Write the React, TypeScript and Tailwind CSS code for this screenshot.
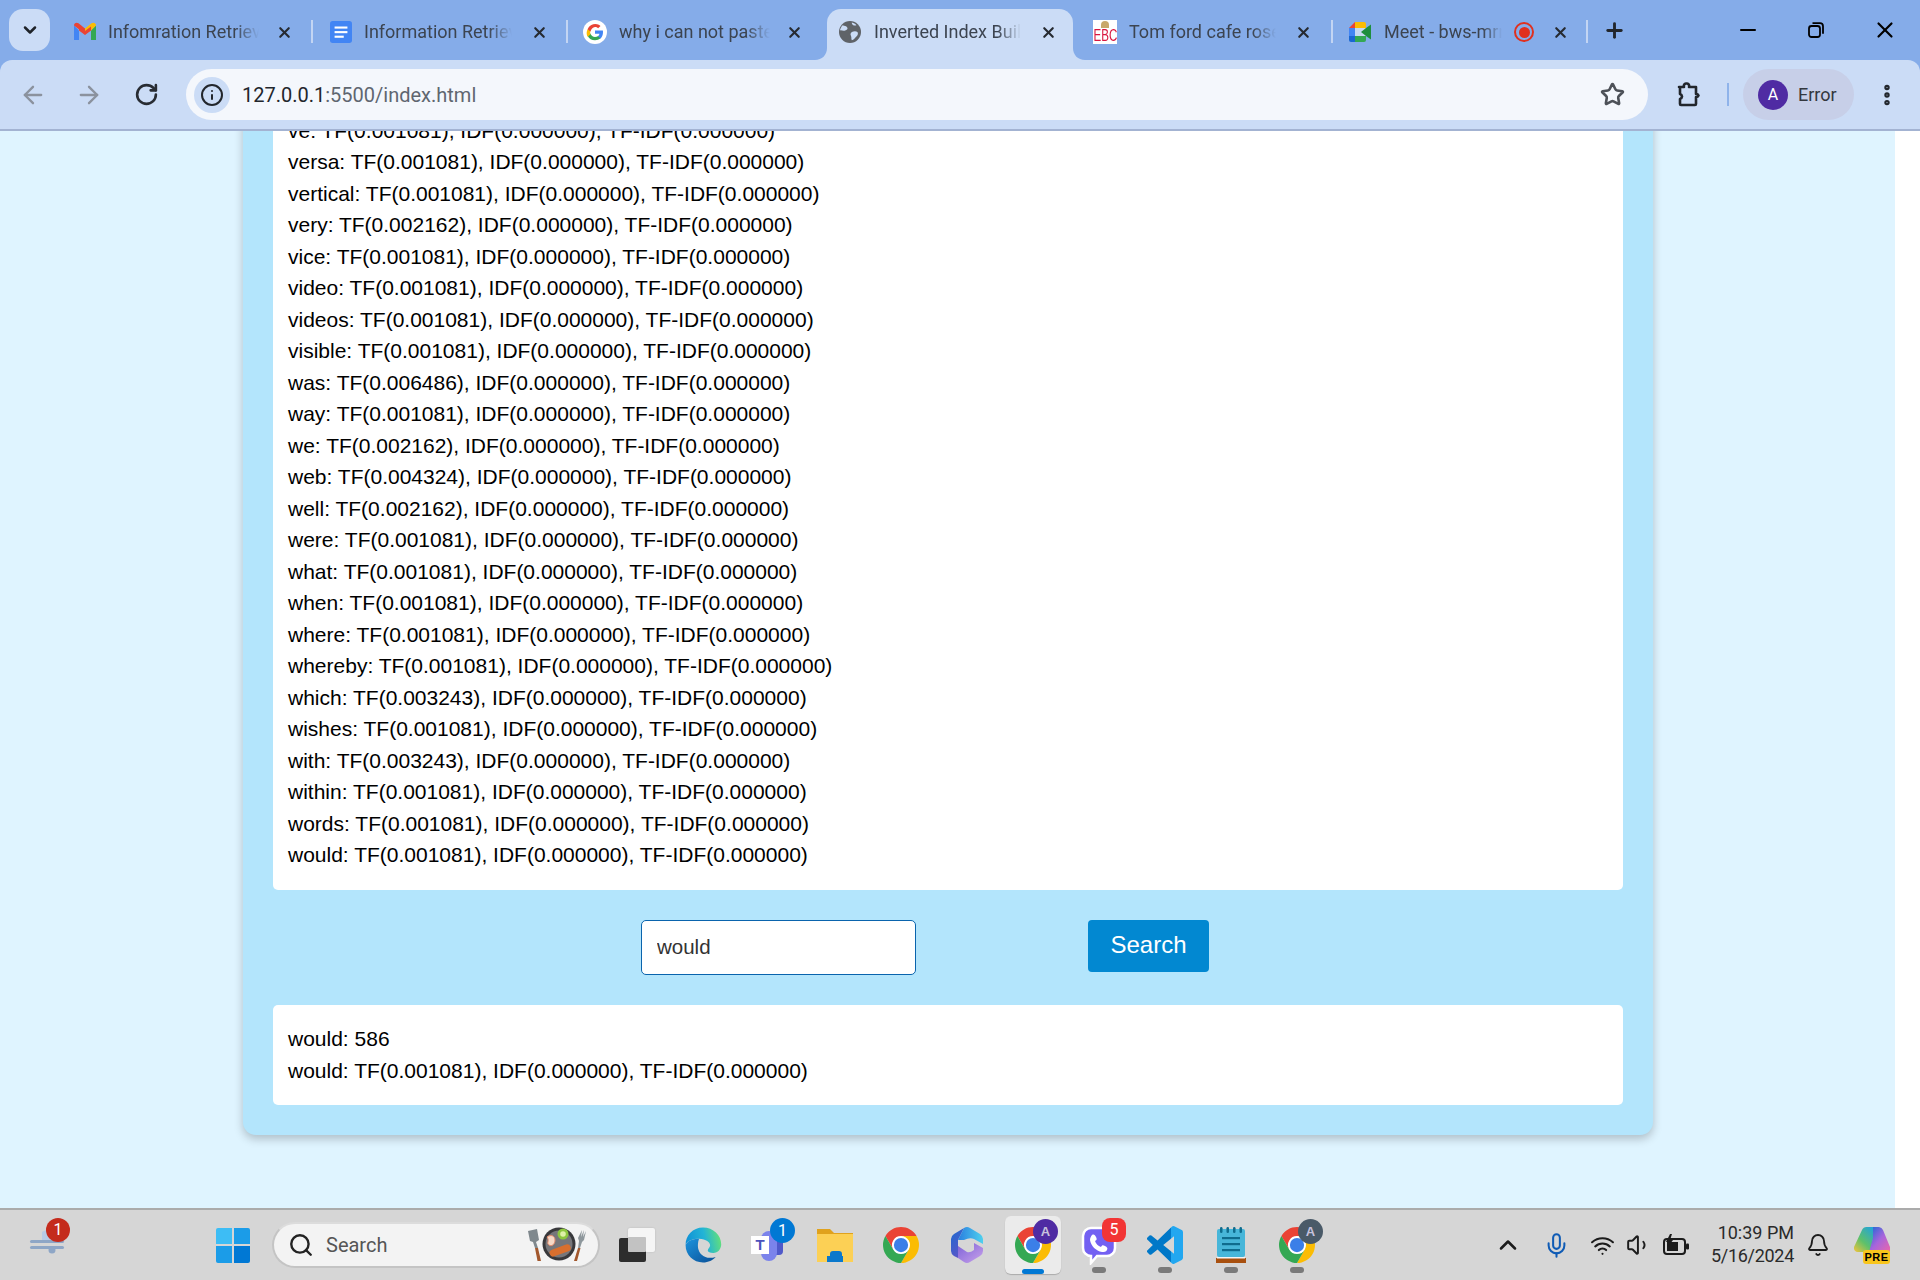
import React from "react";
import { ArrowLeft, ArrowRight, RotateCw, Info, Star, ChevronDown, ChevronUp, X, Plus, Minus, Search, Mic, Wifi, Volume1, Bell, EllipsisVertical } from "lucide-react";

const rows: [string, string][] = [
  ["ve", "0.001081"], ["versa", "0.001081"], ["vertical", "0.001081"], ["very", "0.002162"], ["vice", "0.001081"],
  ["video", "0.001081"], ["videos", "0.001081"], ["visible", "0.001081"], ["was", "0.006486"], ["way", "0.001081"],
  ["we", "0.002162"], ["web", "0.004324"], ["well", "0.002162"], ["were", "0.001081"], ["what", "0.001081"],
  ["when", "0.001081"], ["where", "0.001081"], ["whereby", "0.001081"], ["which", "0.003243"], ["wishes", "0.001081"],
  ["with", "0.003243"], ["within", "0.001081"], ["words", "0.001081"], ["would", "0.001081"],
];

const line = (w: string, tf: string) => `${w}: TF(${tf}), IDF(0.000000), TF-IDF(0.000000)`;

function Chrome({ size = 36 }: { size?: number }) {
  return (
    <svg width={size} height={size} viewBox="0 0 48 48">
      <circle cx="24" cy="24" r="13" fill="#fff" />
      <path d="M3.22 12A24 24 0 0 1 44.78 12H24A12 12 0 0 0 13.6 30Z" fill="#ea4335" />
      <path d="M44.78 12A24 24 0 0 1 24 48L34.39 30A12 12 0 0 0 24 12Z" fill="#fbbc04" />
      <path d="M24 48A24 24 0 0 1 3.22 12L13.6 30A12 12 0 0 0 34.39 30Z" fill="#34a853" />
      <circle cx="24" cy="24" r="9.5" fill="#3b7fe8" />
    </svg>
  );
}

function Gmail() {
  return (
    <svg width="24" height="24" viewBox="0 0 24 24">
      <path d="M1 5.5V20h5V10.5Z" fill="#4285f4" />
      <path d="M18 10.500V20h5V5.500Z" fill="#34a853" />
      <path d="M1 5.500C1 3 3.500 2 5.500 3.300L12 8.500 12 14 1 5.500Z" fill="#ea4335" />
      <path d="M12 8.500l6.500-5.200C20.500 2 23 3 23 5.500L18 10.500 12 14Z" fill="#fbbc04" />
      <path d="M6 10.500 12 15l6-4.500V6.500L12 11 6 6.500Z" fill="#ea4335" />
    </svg>
  );
}

function DocsIcon() {
  return (
    <svg width="24" height="24" viewBox="0 0 24 24" className="ml-[2px]">
      <rect x="0" y="0" width="24" height="24" rx="3" fill="#4285f4" />
      <rect x="5" y="6" width="14" height="2.300" fill="#fff" />
      <rect x="5" y="11" width="14" height="2.300" fill="#fff" />
      <rect x="5" y="16" width="10" height="2.300" fill="#fff" />
    </svg>
  );
}

function GoogleG() {
  return (
    <svg width="24" height="24" viewBox="0 0 24 24">
      <circle cx="12" cy="12" r="12" fill="#fff" />
      <path d="M20 12.200c0-.6-.05-1.200-.15-1.700H12v3.300h4.500a3.900 3.900 0 0 1-1.650 2.500v2.100h2.700C19.100 16.900 20 14.700 20 12.200Z" fill="#4285f4" />
      <path d="M12 20.300c2.200 0 4.100-.75 5.500-2l-2.700-2.100c-.75.5-1.700.8-2.800.8-2.150 0-4-1.450-4.650-3.400H4.600v2.150A8.300 8.300 0 0 0 12 20.300Z" fill="#34a853" />
      <path d="M7.350 14.600a5 5 0 0 1 0-3.200V9.250H4.600a8.300 8.300 0 0 0 0 7.500Z" fill="#fbbc04" />
      <path d="M12 7c1.200 0 2.300.4 3.150 1.250l2.350-2.350A8.300 8.300 0 0 0 4.600 9.250l2.750 2.150C8 9.450 9.850 7 12 7Z" fill="#ea4335" />
    </svg>
  );
}

function Globe() {
  return (
    <svg width="22" height="22" viewBox="0 0 24 24">
      <circle cx="12" cy="12" r="12" fill="#5f6368" />
      <path d="M4 4.500c2 1 4 .5 5 2.500s-1 3-3 3.500-4-1-5 0C1.500 8 2.500 6 4 4.500Z" fill="#cbdcf6" />
      <path d="M14 12c2-1 5-1 6 0s1 3-1 5-3 4-5 4c-1-2 0-3-1-5s0-3 1-4Z" fill="#cbdcf6" />
      <path d="M14 1.500c2 .5 4 1.500 5 3-1.500 1-3 .5-4-.5s-1-1.500-1-2.500Z" fill="#cbdcf6" />
    </svg>
  );
}

function EbcIcon() {
  return (
    <div className="w-6 h-6 bg-white flex flex-col items-center overflow-hidden">
      <div className="w-[8px] h-[7px] mt-[1px] rounded-t-full bg-[#c9a86a] shrink-0" />
      <span className="text-[#d9163f] text-[17px] leading-[16px] [font-family:'Liberation_Sans',sans-serif] scale-x-[0.68] whitespace-nowrap">EBC</span>
    </div>
  );
}

function MeetIcon() {
  return (
    <svg width="24" height="24" viewBox="0 0 24 24">
      <path d="M1 8 7 2v6Z" fill="#ea4335" />
      <path d="M7 2h9a2 2 0 0 1 2 2v4H7Z" fill="#fbbc04" />
      <path d="M1 8h6v8H1Z" fill="#4285f4" />
      <path d="M1 16h6v6H3a2 2 0 0 1-2-2Z" fill="#1967d2" />
      <path d="M7 16h11v4a2 2 0 0 1-2 2H7Z" fill="#34a853" />
      <path d="M7 8h11v8H7Z" fill="#c7d9f2" />
      <path d="M13 12l5-4 5-3.500v15L18 16Z" fill="#1e8e3e" />
    </svg>
  );
}

function Tab({ icon, title, sep, active, tw = 151, extra, closeClass = "ml-[16px]", textClass = "ml-[12px]" }: { icon: React.ReactNode; title: string; sep?: boolean; active?: boolean; tw?: number; extra?: React.ReactNode; closeClass?: string; textClass?: string }) {
  return (
    <div className="relative w-[255px] h-[51px] flex items-center pl-[15px] pb-[5px] shrink-0">
      {active && (
        <>
          <div className="absolute left-[4px] right-[5px] top-0 bottom-0 bg-[#cbdcf6] rounded-t-[14px]" />
          <svg className="absolute left-[-8px] bottom-0" width="12" height="12" viewBox="0 0 12 12"><path d="M12 0V12H0C7 12 12 7 12 0Z" fill="#cbdcf6" /></svg>
          <svg className="absolute right-[-7px] bottom-0" width="12" height="12" viewBox="0 0 12 12"><path d="M0 0V12H12C5 12 0 7 0 0Z" fill="#cbdcf6" /></svg>
        </>
      )}
      <div className="relative w-6 h-6 flex items-center justify-center shrink-0">{icon}</div>
      <div style={{ width: tw }} className={`relative ${textClass} text-[18px] leading-[24px] text-[#3c4450] whitespace-nowrap overflow-hidden [font-family:Roboto,sans-serif] [mask-image:linear-gradient(to_right,black_84%,transparent)]`}>{title}</div>
      {extra}
      <X className={`relative shrink-0 text-[#262a30] ${closeClass}`} size={17} strokeWidth={3} />
      {sep && <div className="absolute right-0 top-[11px] w-[2px] h-[23px] bg-[#c3d5f3]" />}
    </div>
  );
}

function EdgeIcon() {
  return (
    <svg width="38" height="38" viewBox="0 0 48 48">
      <defs>
        <linearGradient id="e1" x1="0" y1="0.600" x2="1" y2="0.450"><stop offset="0" stopColor="#0f8fd6" /><stop offset="0.550" stopColor="#23b4d6" /><stop offset="1" stopColor="#63e07a" /></linearGradient>
        <linearGradient id="e2" x1="0" y1="0" x2="1" y2="1"><stop offset="0" stopColor="#1b94de" /><stop offset="1" stopColor="#0b4f96" /></linearGradient>
      </defs>
      <path d="M24 2C11 2 2 12 2 24c2-6 10-8 17-8 9 0 14 5 14 8 0 3-3 5-3 7 0 2 3 3 7 3 6 0 10-5 10-11C47 12 37 2 24 2Z" fill="url(#e1)" />
      <path d="M2 24c0 13 10 22 22 22 7 0 12-3 16-7-6 2-13 2-18-3-4-4-6-11-3-20-9 0-15 3-17 8Z" fill="url(#e2)" />
    </svg>
  );
}

function TeamsIcon() {
  return (
    <div className="relative w-9 h-9">
      <div className="absolute left-[20px] top-[6px] w-[12px] h-[22px] rounded-[4px] bg-[#5059c9]" />
      <div className="absolute left-[10px] top-[4px] w-[16px] h-[30px] rounded-[8px] bg-[#7b83eb]" />
      <div className="absolute left-0 top-[9px] w-[18px] h-[18px] bg-white flex items-center justify-center text-[#4b53bc] text-[15px] font-bold [font-family:'Liberation_Sans',sans-serif]">T</div>
    </div>
  );
}

function FilesIcon() {
  return (
    <svg width="36" height="36" viewBox="0 0 36 36">
      <path d="M0 2h13l4 4h19v4H0Z" fill="#e0a21d" />
      <rect x="0" y="7" width="36" height="28" fill="#fcd055" />
      <path d="M13 27a3 3 0 0 1 3-3h6a3 3 0 0 1 3 3v8H13Z M10 29h16v6H10Z" fill="#0a78cc" />
    </svg>
  );
}

function M365() {
  return (
    <svg width="34" height="38" viewBox="0 0 34 38">
      <defs>
        <linearGradient id="m1" x1="0" y1="0" x2="0.500" y2="1"><stop offset="0" stopColor="#1a6bd0" /><stop offset="1" stopColor="#5a55c8" /></linearGradient>
        <linearGradient id="m2" x1="0" y1="0.500" x2="1" y2="0.500"><stop offset="0" stopColor="#2a7fe0" /><stop offset="1" stopColor="#4fd0ee" /></linearGradient>
        <linearGradient id="m3" x1="0" y1="0" x2="1" y2="1"><stop offset="0" stopColor="#7d62d8" /><stop offset="1" stopColor="#c9a2ea" /></linearGradient>
      </defs>
      <path d="M14 2 4 8Q1 10 1 13V25Q1 28 4 30L8 32V14Z" fill="url(#m1)" />
      <path d="M14 2Q17 0 20 2L30 8Q33 10 33 13V18L24 13Q20 11 14 14L8 14Z" fill="url(#m2)" />
      <path d="M8 20 17 26Q20 27 24 24V17L33 22V25Q33 28 30 30L20 36Q17 38 14 36L8 32Z" fill="url(#m3)" />
    </svg>
  );
}

function Viber() {
  return (
    <svg width="36" height="40" viewBox="0 0 36 40">
      <path d="M10 3h16a8 8 0 0 1 8 8v12a8 8 0 0 1-8 8H16l-6 7v-7a8 8 0 0 1-8-8V11a8 8 0 0 1 8-8Z" fill="#7360f2" stroke="#fff" strokeWidth="2.500" />
      <path d="M11 10c2-1 3 0 4 2s1 3-1 4c1 3 3 5 6 6 1-2 2-2 4-1s3 2 2 4-3 2-5 2c-6-1-11-6-12-12 0-2 1-4 2-5Z" fill="#fff" />
    </svg>
  );
}

function VSCode() {
  return (
    <svg width="36" height="38" viewBox="0 0 24 24" preserveAspectRatio="none">
      <defs>
        <linearGradient id="v1" x1="0" y1="0" x2="1" y2="0"><stop offset="0.680" stopColor="#0078c8" /><stop offset="0.680" stopColor="#22a7f0" /></linearGradient>
      </defs>
      <path d="M23.150 2.587L18.210.21a1.494 1.494 0 0 0-1.705.29l-9.460 8.630-4.120-3.128a.999.999 0 0 0-1.276.057L.327 7.261A1 1 0 0 0 .326 8.740L3.899 12 .326 15.260a1 1 0 0 0 .001 1.479L1.650 17.940a.999.999 0 0 0 1.276.057l4.120-3.128 9.460 8.630a1.492 1.492 0 0 0 1.704.29l4.942-2.377A1.500 1.500 0 0 0 24 20.060V3.939a1.500 1.500 0 0 0-.85-1.352zm-5.146 14.861L10.826 12l7.178-5.448v10.896z" fill="url(#v1)" />
    </svg>
  );
}

function Notepad() {
  return (
    <svg width="30" height="38" viewBox="0 0 30 38">
      <rect x="1" y="3" width="28" height="28" rx="2" fill="#47b6d9" />
      {[5, 11.500, 18, 24.500].map((x) => (
        <rect key={x} x={x - 1} y="1" width="2.500" height="6" rx="1.200" fill="#0f6c8e" />
      ))}
      {[11, 17, 23].map((y) => (
        <rect key={y} x="6" y={y} width="18" height="2.200" fill="#0f6c8e" />
      ))}
      <rect x="0" y="32" width="30" height="5" fill="#a8500f" />
      <rect x="1" y="31" width="28" height="1.500" fill="#f4f4f4" />
    </svg>
  );
}

function Food() {
  return (
    <svg width="62" height="42" viewBox="0 0 62 42">
      <path d="M2 7 11 5 13 16 10 18 12 24 9 24 7 18 4 17Z" fill="#7f888d" />
      <path d="M9 24h3l3 13h-3.500Z" fill="#a2572c" />
      <circle cx="33" cy="20" r="16.500" fill="#38383b" />
      <circle cx="33" cy="20" r="13.500" fill="#76767a" />
      <circle cx="37" cy="10" r="5.500" fill="#8dc63f" />
      <circle cx="37" cy="10" r="2.800" fill="#dff0a8" />
      <path d="M21 13c4-3 8-1 8 3s-3 7-6 5 1-4-2-8Z" fill="#f6d9c7" stroke="#e58a6a" strokeWidth="1" />
      <rect x="23" y="23" width="22" height="7" rx="3.500" transform="rotate(-20 34 26)" fill="#d96f2e" />
      <path d="M56 6l-1 7 3-7-1 7 3-6-2 9-2 2-2 6h-2l1-7-1-3Z" fill="#8e979c" />
      <path d="M52 24h2.500l-3.500 13H48Z" fill="#a2572c" />
    </svg>
  );
}

function Copilot() {
  return (
    <div className="relative w-[38px] h-[38px]">
      <svg width="36" height="30" viewBox="0 0 36 30" className="absolute top-0 left-0">
        <defs>
          <linearGradient id="c1" x1="0" y1="1" x2="0.800" y2="0"><stop offset="0" stopColor="#f5c33b" /><stop offset="0.450" stopColor="#5ec16a" /><stop offset="1" stopColor="#23a4d8" /></linearGradient>
          <linearGradient id="c2" x1="0" y1="0" x2="1" y2="1"><stop offset="0" stopColor="#1768d4" /><stop offset="0.500" stopColor="#a765dc" /><stop offset="1" stopColor="#f067a6" /></linearGradient>
        </defs>
        <path d="M8 4a5 5 0 0 1 5-3h9l-5 21a5 5 0 0 1-5 4H4a4 4 0 0 1-4-5Z" fill="url(#c1)" />
        <path d="M19 1h6a5 5 0 0 1 4 3l7 17a3 3 0 0 1-3 5H15l4-14Z" fill="url(#c2)" />
      </svg>
      <div className="absolute left-[9px] bottom-0 w-[27px] h-[14px] rounded-[3px] bg-[#f8c51c] text-black text-[11px] leading-[14px] font-bold text-center tracking-[0.5px] [font-family:'Liberation_Sans',sans-serif]">PRE</div>
    </div>
  );
}

function Slot({ children, dot }: { children: React.ReactNode; dot?: boolean }) {
  return (
    <div className="relative w-[66px] h-full flex items-center justify-center shrink-0">
      {children}
      {dot && <div className="absolute left-[26px] bottom-[7px] w-[14px] h-[6px] rounded-full bg-[#7a7a7a]" />}
    </div>
  );
}

function AvatarBadge({ color, left }: { color: string; left: string }) {
  return (
    <div style={{ backgroundColor: color }} className={`absolute ${left} top-[9px] w-[25px] h-[25px] rounded-full flex items-center justify-center text-[#c7c2dd] text-[13px] font-bold [font-family:'Liberation_Sans',sans-serif]`}>A</div>
  );
}

export default function App() {
  return (
    <div className="w-[1920px] h-[1280px] flex flex-col overflow-hidden [font-family:'Liberation_Sans',Arial,sans-serif] bg-white">
      {/* Browser chrome */}
      <header className="h-[131px] shrink-0 bg-[#85ace9] flex flex-col">
        <div className="h-[60px] flex items-end shrink-0">
          <div className="ml-[9px] mb-[9px] w-[41px] h-[42px] rounded-[14px] bg-[#cbdcf6] flex items-center justify-center shrink-0">
            <ChevronDown size={20} strokeWidth={3} className="text-[#1f2329]" />
          </div>
          <div className="ml-[8px] flex">
            <Tab icon={<Gmail />} title="Infomration Retrieval" sep textClass="ml-[11px]" closeClass="ml-[17px]" />
            <Tab icon={<DocsIcon />} title="Information Retrieval" sep tw={148} closeClass="ml-[19px]" />
            <Tab icon={<GoogleG />} title="why i can not paste text" />
            <Tab icon={<Globe />} title="Inverted Index Builder" active tw={147} closeClass="ml-[19px]" />
            <Tab icon={<EbcIcon />} title="Tom ford cafe rose perfume" sep tw={147} closeClass="ml-[19px]" />
            <Tab
              icon={<MeetIcon />}
              title="Meet - bws-mrn-xyz"
              sep
              tw={118}
              closeClass="ml-[18px]"
              extra={
                <div className="relative ml-[12px] w-[20px] h-[20px] rounded-full border-[2px] border-[#e0301e] flex items-center justify-center shrink-0">
                  <div className="w-[11px] h-[11px] rounded-full bg-[#e0301e]" />
                </div>
              }
            />
          </div>
          <div className="ml-[14px] mb-[18px] w-[24px] h-[24px] flex items-center justify-center">
            <Plus size={23} strokeWidth={3} className="text-[#22262c]" />
          </div>
          <div className="ml-auto flex items-center h-[60px]">
            <Minus size={24} strokeWidth={2} className="text-black" />
            <svg width="16" height="16" viewBox="0 0 16 16" fill="none" stroke="black" strokeWidth="1.800" className="ml-[48px]">
              <rect x="1" y="4" width="11" height="11" rx="2.500" />
              <path d="M4.500 1.200h7.500a3 3 0 0 1 3 3v7.500" />
            </svg>
            <X size={26} strokeWidth={2} className="text-black ml-[48px] mr-[22px]" />
          </div>
        </div>
        <div className="h-[71px] bg-[#cbdcf6] rounded-t-[12px] border-b-[2px] border-[#a3b3d2] flex items-center">
          <ArrowLeft size={28} strokeWidth={2} className="ml-[19px] text-[#8b929e] shrink-0" />
          <ArrowRight size={28} strokeWidth={2} className="ml-[28px] text-[#8b929e] shrink-0" />
          <RotateCw size={25} strokeWidth={2.500} className="ml-[31px] text-[#282c33] shrink-0" />
          <div className="ml-[27px] w-[1462px] h-[51px] rounded-full bg-[#f4f7fc] flex items-center pl-[8px] pr-[23px] shrink-0">
            <div className="w-[36px] h-[36px] rounded-full bg-[#cbdcf6] flex items-center justify-center shrink-0">
              <Info size={24} strokeWidth={2} className="text-[#22262c]" />
            </div>
            <div className="ml-[12px] text-[20px] [font-family:Roboto,sans-serif] text-[#5f6670]">
              <span className="text-[#22262c]">127.0.0.1</span>:5500/index.html
            </div>
            <Star size={25} strokeWidth={2.500} className="ml-auto text-[#4d5158]" />
          </div>
          <svg width="26" height="26" viewBox="0 0 26 26" fill="none" stroke="#22262c" strokeWidth="2.600" strokeLinejoin="round" className="ml-[28px] shrink-0">
            <path d="M3 5h5a2.500 2.500 0 0 1 2-3.500h1a2.500 2.500 0 0 1 2 3.500h7v7a2.500 2.500 0 0 1 2.500 1.500 2.500 2.500 0 0 1-2.500 1.500v7a1 1 0 0 1-1 1H5a1 1 0 0 1-1-1v-5a3 3 0 0 0 2-2.500 3 3 0 0 0-2-2.500V5Z" />
          </svg>
          <div className="ml-[25px] w-[2px] h-[23px] bg-[#8fb3ea] shrink-0" />
          <div className="ml-[14px] w-[111px] h-[51px] rounded-full bg-[#c7cfe8] flex items-center pl-[15px] shrink-0">
            <div className="w-[30px] h-[30px] rounded-full bg-[#4f2ba3] flex items-center justify-center text-white text-[16px] [font-family:Roboto,sans-serif]">A</div>
            <span className="ml-[10px] text-[18px] text-[#33373e] [font-family:Roboto,sans-serif]">Error</span>
          </div>
          <EllipsisVertical size={26} strokeWidth={3} className="ml-[20px] text-[#22262c] shrink-0" />
        </div>
      </header>

      {/* Page */}
      <div className="flex-1 min-h-0 flex overflow-hidden">
        <main className="w-[1895px] shrink-0 bg-[#dff4ff] flex flex-col justify-end items-center overflow-hidden pb-[73px]">
          <section className="w-[1410px] shrink-0 ml-[1px] bg-[#b3e5fc] rounded-[13px] shadow-[0_4px_10px_rgba(0,0,0,0.22)] p-[30px] text-[21px] leading-[31.5px] text-black">
            <div className="bg-white rounded-[5px] px-[15px] pt-[16px] pb-[19.5px]">
              {rows.map(([w, tf]) => (
                <div key={w}>{line(w, tf)}</div>
              ))}
            </div>
            <div className="mt-[30px] flex items-start pl-[368px] gap-[172px]">
              <input
                readOnly
                value="would"
                className="w-[275px] h-[55px] rounded-[5px] bg-white border-[1.5px] border-[#0a64ad] px-[15px] pb-[1px] text-[20.500px] text-[#333] outline-none"
              />
              <button className="w-[121px] h-[52px] rounded-[4px] bg-[#0288d1] text-white text-[24px] leading-[50px] pb-[3px]">Search</button>
            </div>
            <div className="mt-[30px] bg-white rounded-[5px] px-[15px] pt-[18px] pb-[19px]">
              <div>would: 586</div>
              <div>{line("would", "0.001081")}</div>
            </div>
          </section>
        </main>
        <div className="flex-1 bg-white" />
      </div>

      {/* Taskbar */}
      <footer className="h-[72px] shrink-0 bg-[#d6d6d6] border-t-[2px] border-[#ababab] flex items-center relative [font-family:Roboto,sans-serif]">
        <div className="relative w-[100px] h-full shrink-0">
          <svg width="40" height="26" viewBox="0 0 40 26" className="absolute left-[28px] top-[20px]">
            <path d="M14 2c4-3 11-2 12 3l4 1v6H14Z" fill="#b7cbe6" />
            <rect x="2" y="10" width="34" height="3" rx="1.500" fill="#8ea6c6" />
            <rect x="2" y="16" width="34" height="3" rx="1.500" fill="#8ea6c6" />
            <circle cx="24" cy="20" r="3.500" fill="#8ea6c6" />
          </svg>
          <div className="absolute left-[46px] top-[8px] w-[24px] h-[24px] rounded-full bg-[#c42b1c] text-white text-[16px] leading-[24px] text-center">1</div>
        </div>
        <div className="ml-[116px] grid grid-cols-2 gap-[2px] w-[34px] h-[35px] shrink-0">
          <div className="rounded-tl-[2px] bg-[#3dbdf5]" />
          <div className="rounded-tr-[2px] bg-[#1b9ce8]" />
          <div className="rounded-bl-[2px] bg-[#1b9ce8]" />
          <div className="rounded-br-[2px] bg-[#0078d4]" />
        </div>
        <div className="ml-[22px] w-[328px] h-[46px] rounded-full bg-[#f3f3f3] border-[2px] border-[#c4c4c4] border-t-[#dcdcdc] flex items-center pl-[14px] pr-[10px] shrink-0">
          <Search size={26} strokeWidth={2.200} className="text-[#222]" />
          <span className="ml-[12px] text-[20px] text-[#555]">Search</span>
          <div className="ml-auto flex items-center"><Food /></div>
        </div>
        <div className="ml-[4px] flex h-full shrink-0">
          <Slot>
            <div className="relative w-[36px] h-[34px]">
              <div className="absolute left-[9px] top-0 w-[27px] h-[24px] rounded-[2px] bg-[#f5f5f5] shadow-[0_0_2px_rgba(0,0,0,0.15)]" />
              <div className="absolute left-0 bottom-0 w-[27px] h-[24px] rounded-[2px] bg-[#2d2d2d]" />
              <div className="absolute left-[9px] top-[9px] w-[18px] h-[15px] rounded-[1px] bg-[#c2c2c2]" />
            </div>
          </Slot>
          <Slot><EdgeIcon /></Slot>
          <Slot>
            <TeamsIcon />
            <div className="absolute left-[34px] top-[8px] w-[25px] h-[25px] rounded-full bg-[#0078d4] text-white text-[16px] leading-[25px] text-center">1</div>
          </Slot>
          <Slot><FilesIcon /></Slot>
          <Slot><Chrome /></Slot>
          <Slot><M365 /></Slot>
          <div className="relative w-[66px] h-full flex items-center justify-center shrink-0">
            <div className="absolute left-[5px] top-[6px] w-[56px] h-[58px] rounded-[6px] bg-[#ebebeb] shadow-[0_1px_1px_rgba(0,0,0,0.2)]" />
            <div className="relative"><Chrome /></div>
            <AvatarBadge color="#4f2ba3" left="left-[33px]" />
            <div className="absolute left-[22px] bottom-[6px] w-[22px] h-[5px] rounded-full bg-[#0078d4]" />
          </div>
          <Slot dot>
            <Viber />
            <div className="absolute left-[36px] top-[8px] w-[24px] h-[24px] rounded-[8px] bg-[#f23535] text-white text-[16px] leading-[24px] text-center">5</div>
          </Slot>
          <Slot dot><VSCode /></Slot>
          <Slot dot><Notepad /></Slot>
          <Slot dot>
            <Chrome />
            <AvatarBadge color="#4a5a68" left="left-[34px]" />
          </Slot>
        </div>
        <div className="ml-auto flex items-center h-full text-[#1c1c1c]">
          <ChevronUp size={28} strokeWidth={2.200} />
          <Mic size={27} strokeWidth={1.800} className="ml-[21px] text-[#0f5bb5]" />
          <Wifi size={25} strokeWidth={2} className="ml-[20px]" />
          <Volume1 size={26} strokeWidth={1.800} className="ml-[11px]" />
          <svg width="26" height="22" viewBox="0 0 26 22" className="ml-[11px]">
            <rect x="1" y="5" width="21" height="15" rx="3" fill="none" stroke="#1c1c1c" strokeWidth="2" />
            <rect x="4" y="8" width="11" height="9" fill="#1c1c1c" />
            <rect x="23" y="9.500" width="3" height="6" rx="1" fill="#1c1c1c" />
            <path d="M7 0 3 8h3l-2 6 6-8H7l2-6Z" fill="#1c1c1c" />
          </svg>
          <div className="ml-[17px] w-[88px] pb-[3px] flex flex-col items-end text-[18px] leading-[23px] text-[#2a2a2a]">
            <span>10:39 PM</span>
            <span className="tracking-[-0.3px]">5/16/2024</span>
          </div>
          <Bell size={24} strokeWidth={1.800} className="ml-[12px]" />
          <div className="ml-[24px] mr-[28px]"><Copilot /></div>
        </div>
      </footer>
    </div>
  );
}
